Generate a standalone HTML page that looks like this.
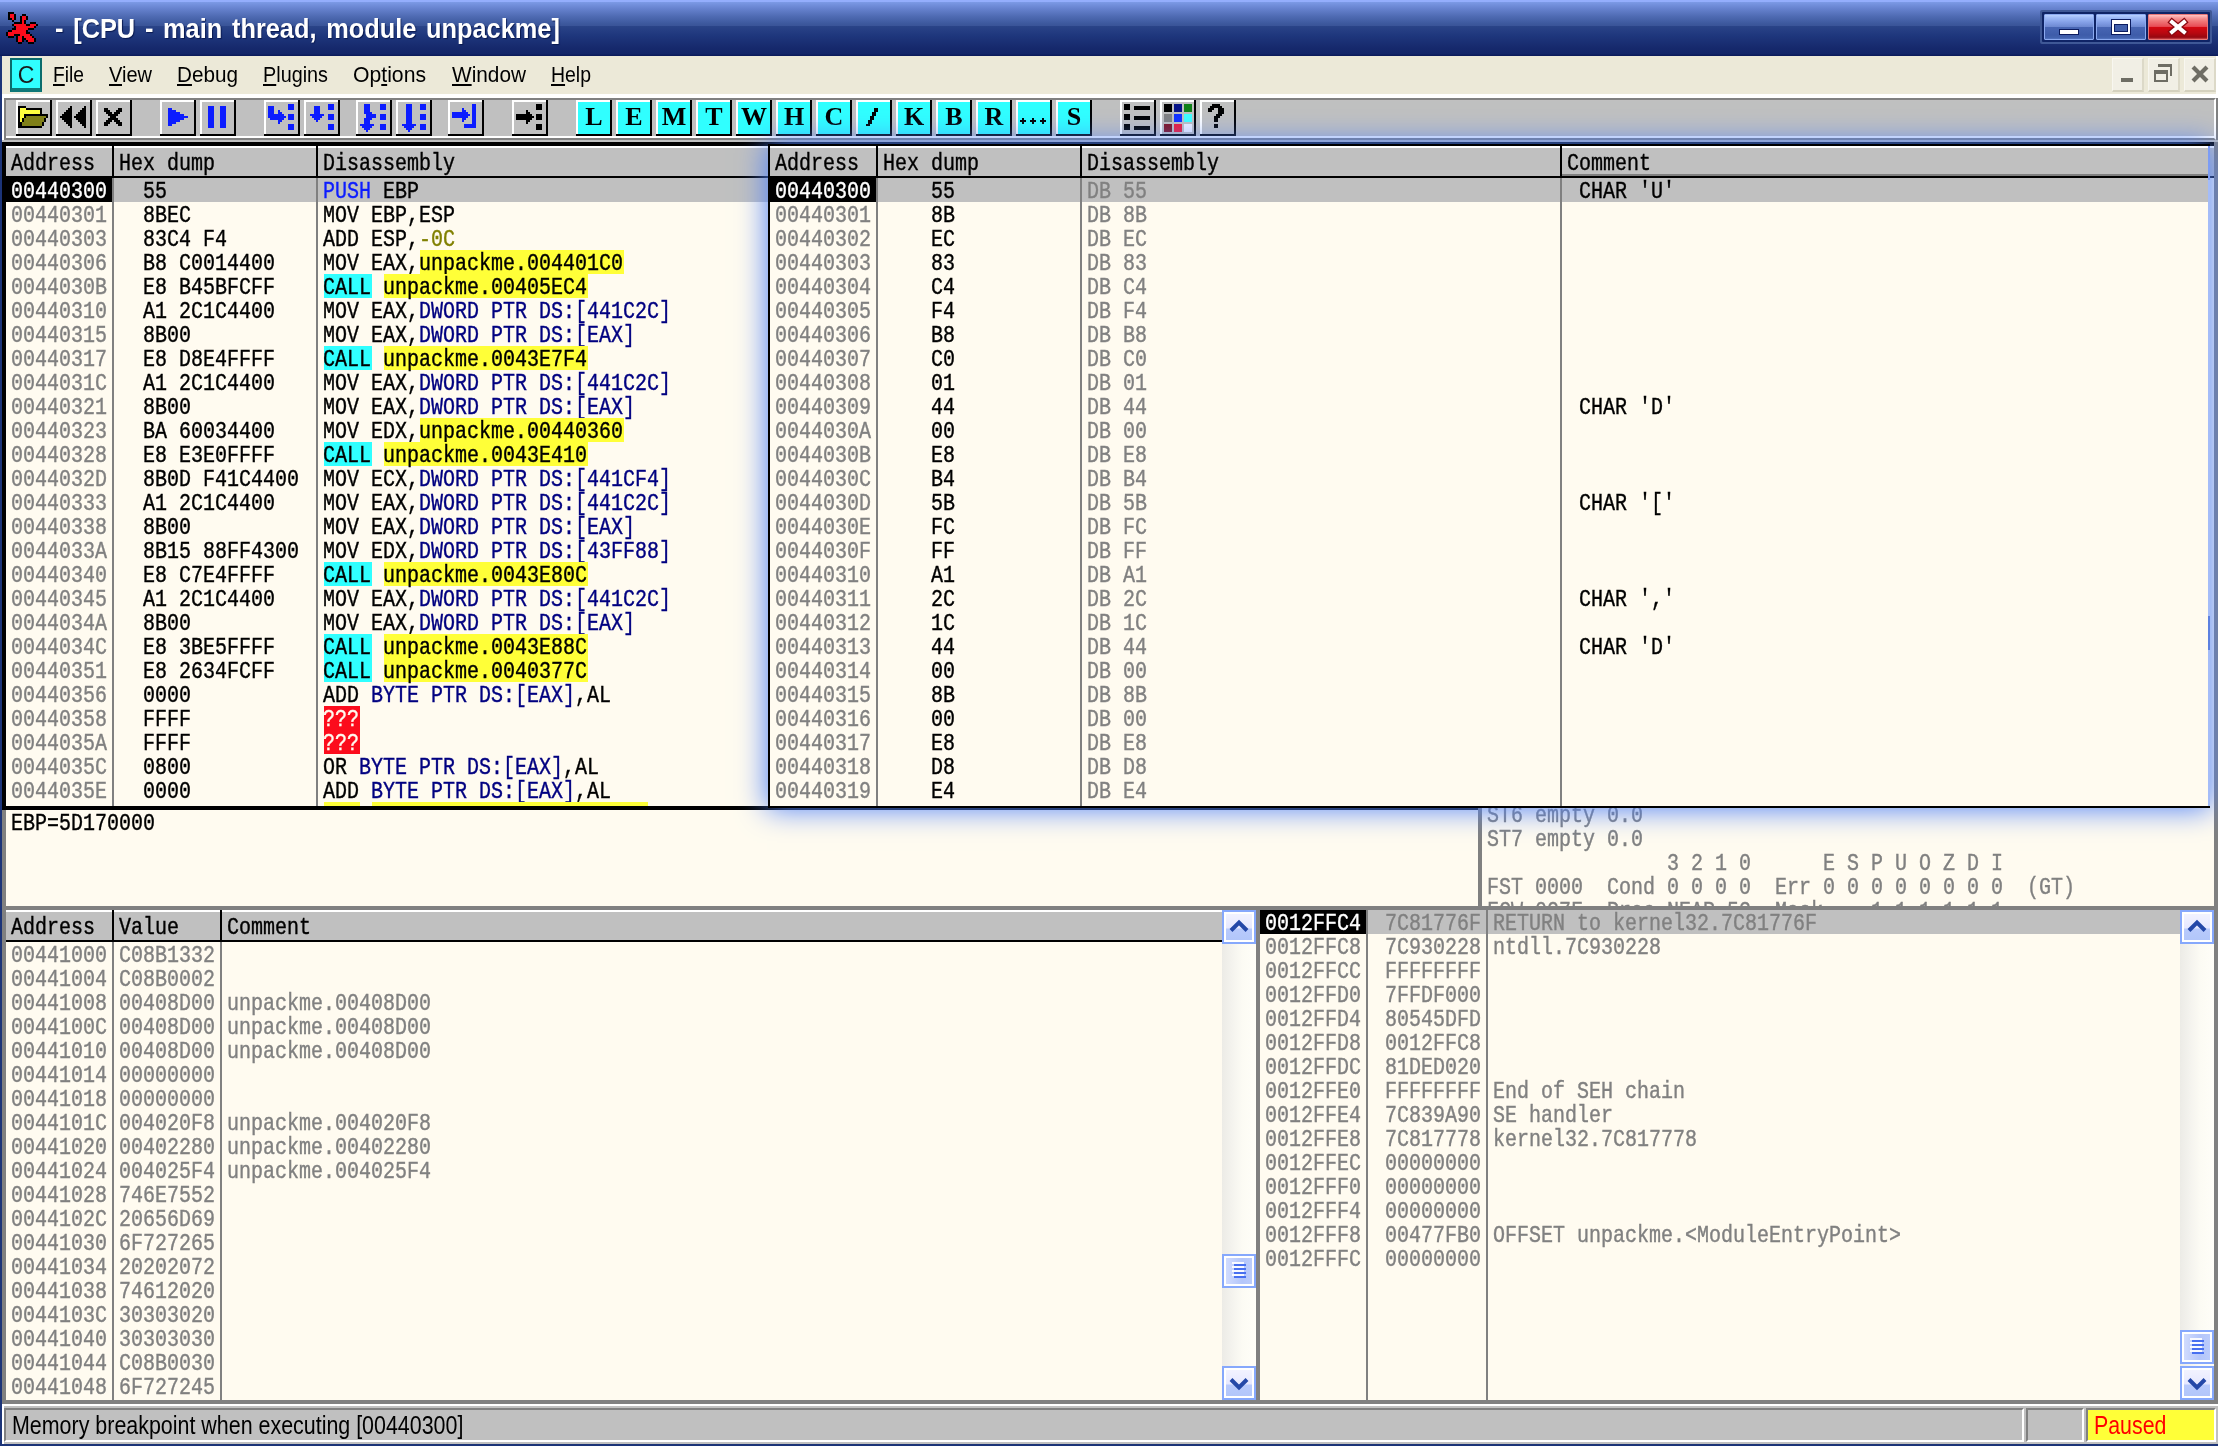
<!DOCTYPE html>
<html><head><meta charset="utf-8"><title>OllyDbg - CPU</title>
<style>
html,body{margin:0;padding:0;background:#c0c0c0;}
body{width:2218px;height:1446px;overflow:hidden;position:relative;font-family:"Liberation Sans",sans-serif;}
#root{will-change:transform;position:absolute;left:0;top:0;width:2218px;height:1446px;overflow:hidden;background:#c0c0c0;}
#root div{position:absolute;box-sizing:border-box;}
#root svg{position:absolute;display:block;}
.m{font-family:"Liberation Mono",monospace;font-size:24px;line-height:24px;height:24px;white-space:pre;transform:scaleX(.8333);transform-origin:0 0;color:#000;-webkit-text-stroke:0.4px currentColor;}
.g{color:#808080;}
.w{color:#fff;}
.clip{overflow:hidden;}
.menu{font-family:"Liberation Sans",sans-serif;font-size:22px;line-height:26px;color:#000;white-space:pre;transform-origin:0 0;}
.menu u{text-decoration:underline;text-decoration-thickness:2px;text-underline-offset:2px;}
.stat{font-family:"Liberation Sans",sans-serif;font-size:25px;line-height:30px;color:#000;white-space:pre;transform-origin:0 0;}
.tb{background:linear-gradient(#c0c0c0,#c0c0c0) 2px 2px/32px 32px no-repeat,linear-gradient(#fff,#fff) 0 0/34px 34px no-repeat,#000;}
.tbc{background:linear-gradient(#30ffff,#30ffff) 2px 2px/32px 32px no-repeat,linear-gradient(#fff,#fff) 0 0/34px 34px no-repeat,#000;padding:2px;font-family:"Liberation Serif",serif;font-weight:bold;font-size:26px;line-height:30px;text-align:center;color:#000;}

</style></head>
<body>
<div id="root">
<div style="left:0px;top:0px;width:2218px;height:56px;background:linear-gradient(to bottom,#94aefc 0px,#94aefc 2px,#7c9ae6 2px,#6884d0 8px,#506cb4 16px,#3c589c 24px,#3a5498 26px,#2a4488 26px,#1e367c 36px,#16296c 48px,#132668 54px,#0c1c5c 55px,#0c1c5c 56px);"></div>
<svg style="left:6px;top:12px" width="32" height="32" viewBox="0 0 16 16" shape-rendering="crispEdges"><rect x="1" y="0" width="3" height="1" fill="#000"/><rect x="1" y="1" width="1" height="1" fill="#000"/><rect x="2" y="1" width="2" height="1" fill="#fc0c1c"/><rect x="4" y="1" width="1" height="1" fill="#000"/><rect x="8" y="1" width="2" height="1" fill="#000"/><rect x="1" y="2" width="1" height="1" fill="#000"/><rect x="2" y="2" width="2" height="1" fill="#fc0c1c"/><rect x="4" y="2" width="1" height="1" fill="#000"/><rect x="7" y="2" width="1" height="1" fill="#000"/><rect x="8" y="2" width="2" height="1" fill="#fc0c1c"/><rect x="10" y="2" width="1" height="1" fill="#000"/><rect x="1" y="3" width="2" height="1" fill="#000"/><rect x="3" y="3" width="1" height="1" fill="#fc0c1c"/><rect x="4" y="3" width="1" height="1" fill="#000"/><rect x="7" y="3" width="1" height="1" fill="#000"/><rect x="8" y="3" width="2" height="1" fill="#fc0c1c"/><rect x="10" y="3" width="1" height="1" fill="#000"/><rect x="3" y="4" width="1" height="1" fill="#000"/><rect x="7" y="4" width="1" height="1" fill="#000"/><rect x="8" y="4" width="1" height="1" fill="#fc0c1c"/><rect x="9" y="4" width="1" height="1" fill="#000"/><rect x="4" y="5" width="4" height="1" fill="#000"/><rect x="8" y="5" width="1" height="1" fill="#fc0c1c"/><rect x="9" y="5" width="1" height="1" fill="#000"/><rect x="12" y="5" width="3" height="1" fill="#000"/><rect x="3" y="6" width="1" height="1" fill="#000"/><rect x="4" y="6" width="6" height="1" fill="#fc0c1c"/><rect x="10" y="6" width="2" height="1" fill="#000"/><rect x="12" y="6" width="3" height="1" fill="#fc0c1c"/><rect x="15" y="6" width="1" height="1" fill="#000"/><rect x="4" y="7" width="1" height="1" fill="#000"/><rect x="5" y="7" width="9" height="1" fill="#fc0c1c"/><rect x="14" y="7" width="1" height="1" fill="#000"/><rect x="3" y="8" width="2" height="1" fill="#000"/><rect x="5" y="8" width="6" height="1" fill="#fc0c1c"/><rect x="11" y="8" width="3" height="1" fill="#000"/><rect x="1" y="9" width="2" height="1" fill="#000"/><rect x="3" y="9" width="7" height="1" fill="#fc0c1c"/><rect x="10" y="9" width="1" height="1" fill="#000"/><rect x="0" y="10" width="1" height="1" fill="#000"/><rect x="1" y="10" width="9" height="1" fill="#fc0c1c"/><rect x="10" y="10" width="2" height="1" fill="#000"/><rect x="0" y="11" width="1" height="1" fill="#000"/><rect x="1" y="11" width="3" height="1" fill="#fc0c1c"/><rect x="4" y="11" width="3" height="1" fill="#000"/><rect x="7" y="11" width="5" height="1" fill="#fc0c1c"/><rect x="12" y="11" width="1" height="1" fill="#000"/><rect x="1" y="12" width="3" height="1" fill="#000"/><rect x="5" y="12" width="1" height="1" fill="#000"/><rect x="6" y="12" width="2" height="1" fill="#fc0c1c"/><rect x="8" y="12" width="1" height="1" fill="#000"/><rect x="9" y="12" width="4" height="1" fill="#fc0c1c"/><rect x="13" y="12" width="1" height="1" fill="#000"/><rect x="5" y="13" width="1" height="1" fill="#000"/><rect x="6" y="13" width="2" height="1" fill="#fc0c1c"/><rect x="8" y="13" width="2" height="1" fill="#000"/><rect x="10" y="13" width="4" height="1" fill="#fc0c1c"/><rect x="14" y="13" width="1" height="1" fill="#000"/><rect x="5" y="14" width="1" height="1" fill="#000"/><rect x="6" y="14" width="2" height="1" fill="#fc0c1c"/><rect x="8" y="14" width="1" height="1" fill="#000"/><rect x="10" y="14" width="1" height="1" fill="#000"/><rect x="11" y="14" width="3" height="1" fill="#fc0c1c"/><rect x="14" y="14" width="1" height="1" fill="#000"/><rect x="6" y="15" width="2" height="1" fill="#000"/><rect x="11" y="15" width="3" height="1" fill="#000"/></svg>
<div id="title" style="left:55px;top:11px;font:bold 28px/36px 'Liberation Sans',sans-serif;color:#fff;white-space:pre;transform-origin:0 0;word-spacing:3px;transform:scaleX(.905);text-shadow:1px 1px 1px #0a1a50">- [CPU - main thread, module unpackme]</div>
<div style="left:2040px;top:10px;width:172px;height:34px;background:#3f5896;border-radius:2px"></div>
<div style="left:2042px;top:12px;width:168px;height:30px;background:#0f2466;border-radius:1px"></div>
<div style="left:2044px;top:14px;width:50px;height:26px;background:linear-gradient(to bottom,#b8d0ff 0px,#9cb8f6 3px,#809ce4 8px,#6c88d0 12px,#4866b4 12px,#3e5caa 20px,#4464b0 23px,#6c8cd8 25px,#6c8cd8 26px);border:1px solid #8caaf0;border-radius:1px"></div>
<div style="left:2096px;top:14px;width:50px;height:26px;background:linear-gradient(to bottom,#b8d0ff 0px,#9cb8f6 3px,#809ce4 8px,#6c88d0 12px,#4866b4 12px,#3e5caa 20px,#4464b0 23px,#6c8cd8 25px,#6c8cd8 26px);border:1px solid #8caaf0;border-radius:1px"></div>
<div style="left:2148px;top:14px;width:60px;height:26px;background:linear-gradient(to bottom,#ffc4c4 0px,#f89898 3px,#f07878 6px,#e85058 11px,#e64048 12px,#d40810 12px,#b80810 18px,#980810 22px,#a01820 23px,#d45050 24px,#d45050 26px);border:1px solid #e87878;border-radius:1px"></div>
<div style="left:2059px;top:29px;width:20px;height:6px;background:#0c1c60;"></div>
<div style="left:2060px;top:30px;width:18px;height:4px;background:#fff;"></div>
<div style="left:2111px;top:19px;width:20px;height:16px;background:#0c1c60;"></div>
<div style="left:2112px;top:20px;width:18px;height:14px;background:#fff;"></div>
<div style="left:2114px;top:24px;width:14px;height:8px;background:#4260ac;border:1px solid #0c1c60"></div>
<svg style="left:2166px;top:17px" width="24" height="20" viewBox="0 0 24 20"><path d="M6 5 L18 15 M18 5 L6 15" stroke="#8a0810" stroke-width="6.5" stroke-linecap="square"/><path d="M6 5 L18 15 M18 5 L6 15" stroke="#fff" stroke-width="4" stroke-linecap="square"/></svg>
<div style="left:0px;top:56px;width:2218px;height:38px;background:#ece9d8;"></div>
<div style="left:0px;top:94px;width:2218px;height:4px;background:#fff;"></div>
<div style="left:0px;top:56px;width:2px;height:1390px;background:#1c3478;"></div>
<div style="left:2px;top:94px;width:2px;height:48px;background:#fff;"></div>
<div style="left:10px;top:58px;width:32px;height:34px;background:#30ffff;border-style:solid;border-color:#0a6c6c #0a6c6c #0f7878 #0a6c6c;border-width:2px 2px 4px 2px"></div>
<div style="left:10px;top:58px;width:32px;height:30px;font:23px/34px 'Liberation Sans',sans-serif;color:#181c1c;text-align:center">C</div>
<div class="menu" style="left:53px;top:62px;transform:scaleX(0.8740)"><u>F</u>ile</div>
<div class="menu" style="left:109px;top:62px;transform:scaleX(0.9091)"><u>V</u>iew</div>
<div class="menu" style="left:177px;top:62px;transform:scaleX(0.9408)"><u>D</u>ebug</div>
<div class="menu" style="left:263px;top:62px;transform:scaleX(0.9007)"><u>P</u>lugins</div>
<div class="menu" style="left:353px;top:62px;transform:scaleX(0.9626)">Op<u>t</u>ions</div>
<div class="menu" style="left:452px;top:62px;transform:scaleX(0.9457)"><u>W</u>indow</div>
<div class="menu" style="left:551px;top:62px;transform:scaleX(0.8840)"><u>H</u>elp</div>
<div style="left:2112px;top:58px;width:32px;height:34px;background:#f1efe5;border-style:solid;border-width:1px 2px 2px 1px;border-color:#f8f7f0 #dcd9c8 #d4d1be #f8f7f0"></div>
<div style="left:2148px;top:58px;width:32px;height:34px;background:#f1efe5;border-style:solid;border-width:1px 2px 2px 1px;border-color:#f8f7f0 #dcd9c8 #d4d1be #f8f7f0"></div>
<div style="left:2184px;top:58px;width:32px;height:34px;background:#f1efe5;border-style:solid;border-width:1px 2px 2px 1px;border-color:#f8f7f0 #dcd9c8 #d4d1be #f8f7f0"></div>
<div style="left:2121px;top:78px;width:12px;height:4px;background:#6e6d64;"></div>
<div style="left:2158px;top:64px;width:14px;height:12px;background:transparent;border-style:solid;border-color:#6e6d64;border-width:3px 2px 0 0"></div>
<div style="left:2154px;top:70px;width:14px;height:12px;background:#f1efe5;border-style:solid;border-color:#6e6d64;border-width:4px 2px 2px 2px"></div>
<svg style="left:2190px;top:64px" width="20" height="20" viewBox="0 0 20 20"><path d="M4.5 4.5 L15.5 15.5 M15.5 4.5 L4.5 15.5" stroke="#6e6d64" stroke-width="4.2" stroke-linecap="square"/></svg>
<div style="left:2216px;top:56px;width:2px;height:42px;background:#fff;"></div>
<div style="left:4px;top:98px;width:2212px;height:42px;background:#c0c0c0;border-style:solid;border-width:2px;border-color:#808080 #fff #808080 #808080"></div>
<div style="left:6px;top:136px;width:2208px;height:2px;background:#fff;"></div>
<div style="left:2216px;top:98px;width:2px;height:44px;background:#808080;"></div>
<div style="left:2px;top:140px;width:2216px;height:2px;background:#c0c0c0;"></div>
<div class="tb" style="left:16px;top:100px;width:36px;height:36px"></div>
<svg style="left:16px;top:100px" width="32" height="28" viewBox="0 0 16 14" shape-rendering="crispEdges"><rect x="1" y="3" width="4" height="1" fill="#000"/><rect x="1" y="4" width="1" height="1" fill="#000"/><rect x="2" y="4" width="3" height="1" fill="#ffff40"/><rect x="5" y="4" width="8" height="1" fill="#000"/><rect x="1" y="5" width="1" height="1" fill="#000"/><rect x="2" y="5" width="10" height="1" fill="#ffff40"/><rect x="12" y="5" width="1" height="1" fill="#000"/><rect x="1" y="6" width="1" height="1" fill="#000"/><rect x="2" y="6" width="10" height="1" fill="#ffff40"/><rect x="12" y="6" width="1" height="1" fill="#000"/><rect x="1" y="7" width="1" height="1" fill="#000"/><rect x="2" y="7" width="2" height="1" fill="#ffff40"/><rect x="4" y="7" width="12" height="1" fill="#000"/><rect x="1" y="8" width="1" height="1" fill="#000"/><rect x="2" y="8" width="2" height="1" fill="#ffff40"/><rect x="4" y="8" width="1" height="1" fill="#000"/><rect x="5" y="8" width="10" height="1" fill="#808018"/><rect x="15" y="8" width="1" height="1" fill="#000"/><rect x="1" y="9" width="1" height="1" fill="#000"/><rect x="2" y="9" width="1" height="1" fill="#ffff40"/><rect x="3" y="9" width="1" height="1" fill="#000"/><rect x="4" y="9" width="10" height="1" fill="#808018"/><rect x="14" y="9" width="1" height="1" fill="#000"/><rect x="1" y="10" width="1" height="1" fill="#000"/><rect x="2" y="10" width="1" height="1" fill="#ffff40"/><rect x="3" y="10" width="1" height="1" fill="#000"/><rect x="4" y="10" width="10" height="1" fill="#808018"/><rect x="14" y="10" width="1" height="1" fill="#000"/><rect x="1" y="11" width="2" height="1" fill="#000"/><rect x="3" y="11" width="10" height="1" fill="#808018"/><rect x="13" y="11" width="1" height="1" fill="#000"/><rect x="1" y="12" width="2" height="1" fill="#000"/><rect x="3" y="12" width="10" height="1" fill="#808018"/><rect x="13" y="12" width="1" height="1" fill="#000"/><rect x="1" y="13" width="12" height="1" fill="#000"/></svg>
<div class="tb" style="left:56px;top:100px;width:36px;height:36px"></div>
<svg style="left:56px;top:100px" width="36" height="36" viewBox="0 0 18 18" shape-rendering="crispEdges"><rect x="7" y="3" width="1" height="1" fill="#000"/><rect x="14" y="3" width="1" height="1" fill="#000"/><rect x="6" y="4" width="2" height="1" fill="#000"/><rect x="13" y="4" width="2" height="1" fill="#000"/><rect x="5" y="5" width="3" height="1" fill="#000"/><rect x="12" y="5" width="3" height="1" fill="#000"/><rect x="4" y="6" width="4" height="1" fill="#000"/><rect x="11" y="6" width="4" height="1" fill="#000"/><rect x="3" y="7" width="5" height="1" fill="#000"/><rect x="10" y="7" width="5" height="1" fill="#000"/><rect x="2" y="8" width="6" height="1" fill="#000"/><rect x="9" y="8" width="6" height="1" fill="#000"/><rect x="3" y="9" width="5" height="1" fill="#000"/><rect x="10" y="9" width="5" height="1" fill="#000"/><rect x="4" y="10" width="4" height="1" fill="#000"/><rect x="11" y="10" width="4" height="1" fill="#000"/><rect x="5" y="11" width="3" height="1" fill="#000"/><rect x="12" y="11" width="3" height="1" fill="#000"/><rect x="6" y="12" width="2" height="1" fill="#000"/><rect x="13" y="12" width="2" height="1" fill="#000"/><rect x="7" y="13" width="1" height="1" fill="#000"/><rect x="14" y="13" width="1" height="1" fill="#000"/></svg>
<div class="tb" style="left:96px;top:100px;width:36px;height:36px"></div>
<svg style="left:96px;top:100px" width="36" height="36" viewBox="0 0 18 18" shape-rendering="crispEdges"><rect x="4" y="4" width="2" height="1" fill="#000"/><rect x="11" y="4" width="2" height="1" fill="#000"/><rect x="4" y="5" width="3" height="1" fill="#000"/><rect x="10" y="5" width="3" height="1" fill="#000"/><rect x="5" y="6" width="3" height="1" fill="#000"/><rect x="9" y="6" width="3" height="1" fill="#000"/><rect x="6" y="7" width="5" height="1" fill="#000"/><rect x="7" y="8" width="3" height="1" fill="#000"/><rect x="6" y="9" width="5" height="1" fill="#000"/><rect x="5" y="10" width="3" height="1" fill="#000"/><rect x="9" y="10" width="3" height="1" fill="#000"/><rect x="4" y="11" width="3" height="1" fill="#000"/><rect x="10" y="11" width="3" height="1" fill="#000"/><rect x="4" y="12" width="2" height="1" fill="#000"/><rect x="11" y="12" width="2" height="1" fill="#000"/></svg>
<div class="tb" style="left:160px;top:100px;width:36px;height:36px"></div>
<svg style="left:160px;top:100px" width="36" height="36" viewBox="0 0 18 18" shape-rendering="crispEdges"><rect x="4" y="4" width="2" height="1" fill="#0c1cff"/><rect x="4" y="5" width="4" height="1" fill="#0c1cff"/><rect x="4" y="6" width="6" height="1" fill="#0c1cff"/><rect x="4" y="7" width="8" height="1" fill="#0c1cff"/><rect x="4" y="8" width="10" height="1" fill="#0c1cff"/><rect x="4" y="9" width="8" height="1" fill="#0c1cff"/><rect x="4" y="10" width="6" height="1" fill="#0c1cff"/><rect x="4" y="11" width="4" height="1" fill="#0c1cff"/><rect x="4" y="12" width="2" height="1" fill="#0c1cff"/></svg>
<div class="tb" style="left:200px;top:100px;width:36px;height:36px"></div>
<svg style="left:200px;top:100px" width="26" height="36" viewBox="0 0 13 18" shape-rendering="crispEdges"><rect x="4" y="3" width="3" height="1" fill="#0c1cff"/><rect x="10" y="3" width="3" height="1" fill="#0c1cff"/><rect x="4" y="4" width="3" height="1" fill="#0c1cff"/><rect x="10" y="4" width="3" height="1" fill="#0c1cff"/><rect x="4" y="5" width="3" height="1" fill="#0c1cff"/><rect x="10" y="5" width="3" height="1" fill="#0c1cff"/><rect x="4" y="6" width="3" height="1" fill="#0c1cff"/><rect x="10" y="6" width="3" height="1" fill="#0c1cff"/><rect x="4" y="7" width="3" height="1" fill="#0c1cff"/><rect x="10" y="7" width="3" height="1" fill="#0c1cff"/><rect x="4" y="8" width="3" height="1" fill="#0c1cff"/><rect x="10" y="8" width="3" height="1" fill="#0c1cff"/><rect x="4" y="9" width="3" height="1" fill="#0c1cff"/><rect x="10" y="9" width="3" height="1" fill="#0c1cff"/><rect x="4" y="10" width="3" height="1" fill="#0c1cff"/><rect x="10" y="10" width="3" height="1" fill="#0c1cff"/><rect x="4" y="11" width="3" height="1" fill="#0c1cff"/><rect x="10" y="11" width="3" height="1" fill="#0c1cff"/><rect x="4" y="12" width="3" height="1" fill="#0c1cff"/><rect x="10" y="12" width="3" height="1" fill="#0c1cff"/><rect x="4" y="13" width="3" height="1" fill="#0c1cff"/><rect x="10" y="13" width="3" height="1" fill="#0c1cff"/></svg>
<div class="tb" style="left:264px;top:100px;width:36px;height:36px"></div>
<svg style="left:264px;top:100px" width="36" height="36" viewBox="0 0 18 18" shape-rendering="crispEdges"><rect x="12" y="2" width="3" height="1" fill="#0c1cff"/><rect x="2" y="3" width="3" height="1" fill="#0c1cff"/><rect x="12" y="3" width="3" height="1" fill="#0c1cff"/><rect x="2" y="4" width="3" height="1" fill="#0c1cff"/><rect x="12" y="4" width="3" height="1" fill="#0c1cff"/><rect x="2" y="5" width="3" height="1" fill="#0c1cff"/><rect x="7" y="5" width="1" height="1" fill="#0c1cff"/><rect x="2" y="6" width="3" height="1" fill="#0c1cff"/><rect x="7" y="6" width="2" height="1" fill="#0c1cff"/><rect x="2" y="7" width="8" height="1" fill="#0c1cff"/><rect x="12" y="7" width="3" height="1" fill="#0c1cff"/><rect x="2" y="8" width="9" height="1" fill="#0c1cff"/><rect x="12" y="8" width="3" height="1" fill="#0c1cff"/><rect x="3" y="9" width="7" height="1" fill="#0c1cff"/><rect x="12" y="9" width="3" height="1" fill="#0c1cff"/><rect x="7" y="10" width="2" height="1" fill="#0c1cff"/><rect x="7" y="11" width="1" height="1" fill="#0c1cff"/><rect x="12" y="12" width="3" height="1" fill="#0c1cff"/><rect x="12" y="13" width="3" height="1" fill="#0c1cff"/><rect x="12" y="14" width="3" height="1" fill="#0c1cff"/></svg>
<div class="tb" style="left:304px;top:100px;width:36px;height:36px"></div>
<svg style="left:304px;top:100px" width="36" height="36" viewBox="0 0 18 18" shape-rendering="crispEdges"><rect x="12" y="2" width="3" height="1" fill="#0c1cff"/><rect x="5" y="3" width="3" height="1" fill="#0c1cff"/><rect x="12" y="3" width="3" height="1" fill="#0c1cff"/><rect x="5" y="4" width="3" height="1" fill="#0c1cff"/><rect x="12" y="4" width="3" height="1" fill="#0c1cff"/><rect x="5" y="5" width="3" height="1" fill="#0c1cff"/><rect x="5" y="6" width="3" height="1" fill="#0c1cff"/><rect x="3" y="7" width="7" height="1" fill="#0c1cff"/><rect x="12" y="7" width="3" height="1" fill="#0c1cff"/><rect x="4" y="8" width="5" height="1" fill="#0c1cff"/><rect x="12" y="8" width="3" height="1" fill="#0c1cff"/><rect x="5" y="9" width="3" height="1" fill="#0c1cff"/><rect x="12" y="9" width="3" height="1" fill="#0c1cff"/><rect x="6" y="10" width="1" height="1" fill="#0c1cff"/><rect x="12" y="12" width="3" height="1" fill="#0c1cff"/><rect x="12" y="13" width="3" height="1" fill="#0c1cff"/><rect x="12" y="14" width="3" height="1" fill="#0c1cff"/></svg>
<div class="tb" style="left:356px;top:100px;width:36px;height:36px"></div>
<svg style="left:356px;top:100px" width="36" height="36" viewBox="0 0 18 18" shape-rendering="crispEdges"><rect x="4" y="2" width="3" height="1" fill="#0c1cff"/><rect x="12" y="2" width="3" height="1" fill="#0c1cff"/><rect x="4" y="3" width="3" height="1" fill="#0c1cff"/><rect x="12" y="3" width="3" height="1" fill="#0c1cff"/><rect x="4" y="4" width="3" height="1" fill="#0c1cff"/><rect x="12" y="4" width="3" height="1" fill="#0c1cff"/><rect x="4" y="5" width="3" height="1" fill="#0c1cff"/><rect x="4" y="6" width="4" height="1" fill="#0c1cff"/><rect x="5" y="7" width="5" height="1" fill="#0c1cff"/><rect x="12" y="7" width="3" height="1" fill="#0c1cff"/><rect x="5" y="8" width="5" height="1" fill="#0c1cff"/><rect x="12" y="8" width="3" height="1" fill="#0c1cff"/><rect x="4" y="9" width="4" height="1" fill="#0c1cff"/><rect x="12" y="9" width="3" height="1" fill="#0c1cff"/><rect x="4" y="10" width="3" height="1" fill="#0c1cff"/><rect x="4" y="11" width="3" height="1" fill="#0c1cff"/><rect x="2" y="12" width="7" height="1" fill="#0c1cff"/><rect x="12" y="12" width="3" height="1" fill="#0c1cff"/><rect x="3" y="13" width="5" height="1" fill="#0c1cff"/><rect x="12" y="13" width="3" height="1" fill="#0c1cff"/><rect x="4" y="14" width="3" height="1" fill="#0c1cff"/><rect x="12" y="14" width="3" height="1" fill="#0c1cff"/><rect x="5" y="15" width="1" height="1" fill="#0c1cff"/></svg>
<div class="tb" style="left:396px;top:100px;width:36px;height:36px"></div>
<svg style="left:396px;top:100px" width="36" height="36" viewBox="0 0 18 18" shape-rendering="crispEdges"><rect x="5" y="2" width="3" height="1" fill="#0c1cff"/><rect x="12" y="2" width="3" height="1" fill="#0c1cff"/><rect x="5" y="3" width="3" height="1" fill="#0c1cff"/><rect x="12" y="3" width="3" height="1" fill="#0c1cff"/><rect x="5" y="4" width="3" height="1" fill="#0c1cff"/><rect x="12" y="4" width="3" height="1" fill="#0c1cff"/><rect x="5" y="5" width="3" height="1" fill="#0c1cff"/><rect x="5" y="6" width="3" height="1" fill="#0c1cff"/><rect x="5" y="7" width="3" height="1" fill="#0c1cff"/><rect x="12" y="7" width="3" height="1" fill="#0c1cff"/><rect x="5" y="8" width="3" height="1" fill="#0c1cff"/><rect x="12" y="8" width="3" height="1" fill="#0c1cff"/><rect x="5" y="9" width="3" height="1" fill="#0c1cff"/><rect x="12" y="9" width="3" height="1" fill="#0c1cff"/><rect x="5" y="10" width="3" height="1" fill="#0c1cff"/><rect x="5" y="11" width="3" height="1" fill="#0c1cff"/><rect x="3" y="12" width="7" height="1" fill="#0c1cff"/><rect x="12" y="12" width="3" height="1" fill="#0c1cff"/><rect x="4" y="13" width="5" height="1" fill="#0c1cff"/><rect x="12" y="13" width="3" height="1" fill="#0c1cff"/><rect x="5" y="14" width="3" height="1" fill="#0c1cff"/><rect x="12" y="14" width="3" height="1" fill="#0c1cff"/><rect x="6" y="15" width="1" height="1" fill="#0c1cff"/></svg>
<div class="tb" style="left:448px;top:100px;width:36px;height:36px"></div>
<svg style="left:448px;top:100px" width="28" height="28" viewBox="0 0 14 14" shape-rendering="crispEdges"><rect x="12" y="2" width="2" height="1" fill="#0c1cff"/><rect x="12" y="3" width="2" height="1" fill="#0c1cff"/><rect x="7" y="4" width="1" height="1" fill="#0c1cff"/><rect x="12" y="4" width="2" height="1" fill="#0c1cff"/><rect x="7" y="5" width="2" height="1" fill="#0c1cff"/><rect x="12" y="5" width="2" height="1" fill="#0c1cff"/><rect x="2" y="6" width="8" height="1" fill="#0c1cff"/><rect x="12" y="6" width="2" height="1" fill="#0c1cff"/><rect x="2" y="7" width="9" height="1" fill="#0c1cff"/><rect x="12" y="7" width="2" height="1" fill="#0c1cff"/><rect x="2" y="8" width="8" height="1" fill="#0c1cff"/><rect x="12" y="8" width="2" height="1" fill="#0c1cff"/><rect x="7" y="9" width="2" height="1" fill="#0c1cff"/><rect x="12" y="9" width="2" height="1" fill="#0c1cff"/><rect x="7" y="10" width="1" height="1" fill="#0c1cff"/><rect x="12" y="10" width="2" height="1" fill="#0c1cff"/><rect x="12" y="11" width="2" height="1" fill="#0c1cff"/><rect x="8" y="12" width="6" height="1" fill="#0c1cff"/><rect x="8" y="13" width="6" height="1" fill="#0c1cff"/></svg>
<div class="tb" style="left:512px;top:100px;width:36px;height:36px"></div>
<svg style="left:512px;top:100px" width="36" height="36" viewBox="0 0 18 18" shape-rendering="crispEdges"><rect x="12" y="2" width="3" height="1" fill="#000"/><rect x="12" y="3" width="3" height="1" fill="#000"/><rect x="12" y="4" width="3" height="1" fill="#000"/><rect x="7" y="5" width="1" height="1" fill="#000"/><rect x="7" y="6" width="2" height="1" fill="#000"/><rect x="2" y="7" width="8" height="1" fill="#000"/><rect x="12" y="7" width="3" height="1" fill="#000"/><rect x="2" y="8" width="9" height="1" fill="#000"/><rect x="12" y="8" width="3" height="1" fill="#000"/><rect x="2" y="9" width="8" height="1" fill="#000"/><rect x="12" y="9" width="3" height="1" fill="#000"/><rect x="7" y="10" width="2" height="1" fill="#000"/><rect x="7" y="11" width="1" height="1" fill="#000"/><rect x="12" y="12" width="3" height="1" fill="#000"/><rect x="12" y="13" width="3" height="1" fill="#000"/><rect x="12" y="14" width="3" height="1" fill="#000"/></svg>
<div class="tbc" style="left:576px;top:100px;width:36px;height:36px">L</div>
<div class="tbc" style="left:616px;top:100px;width:36px;height:36px">E</div>
<div class="tbc" style="left:656px;top:100px;width:36px;height:36px">M</div>
<div class="tbc" style="left:696px;top:100px;width:36px;height:36px">T</div>
<div class="tbc" style="left:736px;top:100px;width:36px;height:36px">W</div>
<div class="tbc" style="left:776px;top:100px;width:36px;height:36px">H</div>
<div class="tbc" style="left:816px;top:100px;width:36px;height:36px">C</div>
<div class="tbc" style="left:856px;top:100px;width:36px;height:36px"></div>
<svg style="left:856px;top:100px" width="22" height="26" viewBox="0 0 11 13" shape-rendering="crispEdges"><rect x="9" y="4" width="2" height="1" fill="#000"/><rect x="9" y="5" width="2" height="1" fill="#000"/><rect x="8" y="6" width="2" height="1" fill="#000"/><rect x="8" y="7" width="2" height="1" fill="#000"/><rect x="7" y="8" width="2" height="1" fill="#000"/><rect x="7" y="9" width="2" height="1" fill="#000"/><rect x="6" y="10" width="2" height="1" fill="#000"/><rect x="6" y="11" width="2" height="1" fill="#000"/><rect x="5" y="12" width="2" height="1" fill="#000"/></svg>
<div class="tbc" style="left:896px;top:100px;width:36px;height:36px">K</div>
<div class="tbc" style="left:936px;top:100px;width:36px;height:36px">B</div>
<div class="tbc" style="left:976px;top:100px;width:36px;height:36px">R</div>
<div class="tbc" style="left:1016px;top:100px;width:36px;height:36px"></div>
<svg style="left:1016px;top:100px" width="30" height="24" viewBox="0 0 15 12" shape-rendering="crispEdges"><rect x="3" y="9" width="1" height="1" fill="#000"/><rect x="8" y="9" width="1" height="1" fill="#000"/><rect x="13" y="9" width="1" height="1" fill="#000"/><rect x="2" y="10" width="3" height="1" fill="#000"/><rect x="7" y="10" width="3" height="1" fill="#000"/><rect x="12" y="10" width="3" height="1" fill="#000"/><rect x="3" y="11" width="1" height="1" fill="#000"/><rect x="8" y="11" width="1" height="1" fill="#000"/><rect x="13" y="11" width="1" height="1" fill="#000"/></svg>
<div class="tbc" style="left:1056px;top:100px;width:36px;height:36px">S</div>
<div class="tb" style="left:1120px;top:100px;width:36px;height:36px"></div>
<svg style="left:1120px;top:100px" width="30" height="30" viewBox="0 0 15 15" shape-rendering="crispEdges"><rect x="2" y="2" width="3" height="1" fill="#000"/><rect x="2" y="3" width="3" height="1" fill="#000"/><rect x="7" y="3" width="8" height="1" fill="#000"/><rect x="2" y="4" width="3" height="1" fill="#000"/><rect x="7" y="4" width="8" height="1" fill="#000"/><rect x="2" y="7" width="3" height="1" fill="#000"/><rect x="2" y="8" width="3" height="1" fill="#000"/><rect x="7" y="8" width="8" height="1" fill="#000"/><rect x="2" y="9" width="3" height="1" fill="#000"/><rect x="7" y="9" width="8" height="1" fill="#000"/><rect x="2" y="12" width="3" height="1" fill="#000"/><rect x="2" y="13" width="3" height="1" fill="#000"/><rect x="7" y="13" width="8" height="1" fill="#000"/><rect x="2" y="14" width="3" height="1" fill="#000"/><rect x="7" y="14" width="8" height="1" fill="#000"/></svg>
<div class="tb" style="left:1160px;top:100px;width:36px;height:36px"></div>
<svg style="left:1160px;top:100px" width="32" height="34" viewBox="0 0 16 17" shape-rendering="crispEdges"><rect x="2" y="2" width="4" height="1" fill="#000"/><rect x="7" y="2" width="4" height="1" fill="#081488"/><rect x="12" y="2" width="4" height="1" fill="#108018"/><rect x="2" y="3" width="4" height="1" fill="#000"/><rect x="7" y="3" width="4" height="1" fill="#081488"/><rect x="12" y="3" width="4" height="1" fill="#108018"/><rect x="2" y="4" width="4" height="1" fill="#000"/><rect x="7" y="4" width="4" height="1" fill="#081488"/><rect x="12" y="4" width="4" height="1" fill="#108018"/><rect x="2" y="5" width="4" height="1" fill="#000"/><rect x="7" y="5" width="4" height="1" fill="#081488"/><rect x="12" y="5" width="4" height="1" fill="#108018"/><rect x="2" y="7" width="4" height="1" fill="#808080"/><rect x="7" y="7" width="4" height="1" fill="#1030ff"/><rect x="12" y="7" width="4" height="1" fill="#40ffff"/><rect x="2" y="8" width="4" height="1" fill="#808080"/><rect x="7" y="8" width="4" height="1" fill="#1030ff"/><rect x="12" y="8" width="4" height="1" fill="#40ffff"/><rect x="2" y="9" width="4" height="1" fill="#808080"/><rect x="7" y="9" width="4" height="1" fill="#1030ff"/><rect x="12" y="9" width="4" height="1" fill="#40ffff"/><rect x="2" y="10" width="4" height="1" fill="#808080"/><rect x="7" y="10" width="4" height="1" fill="#1030ff"/><rect x="12" y="10" width="4" height="1" fill="#40ffff"/><rect x="2" y="12" width="4" height="1" fill="#801020"/><rect x="7" y="12" width="4" height="1" fill="#f01838"/><rect x="12" y="12" width="4" height="1" fill="#f0f0ff"/><rect x="2" y="13" width="4" height="1" fill="#801020"/><rect x="7" y="13" width="4" height="1" fill="#f01838"/><rect x="12" y="13" width="4" height="1" fill="#f0f0ff"/><rect x="2" y="14" width="4" height="1" fill="#801020"/><rect x="7" y="14" width="4" height="1" fill="#f01838"/><rect x="12" y="14" width="4" height="1" fill="#f0f0ff"/><rect x="2" y="15" width="4" height="1" fill="#801020"/><rect x="7" y="15" width="4" height="1" fill="#f01838"/><rect x="12" y="15" width="4" height="1" fill="#f0f0ff"/></svg>
<div class="tb" style="left:1200px;top:100px;width:36px;height:36px"></div>
<svg style="left:1200px;top:100px" width="24" height="28" viewBox="0 0 12 14" shape-rendering="crispEdges"><rect x="6" y="2" width="4" height="1" fill="#000"/><rect x="5" y="3" width="6" height="1" fill="#000"/><rect x="4" y="4" width="3" height="1" fill="#000"/><rect x="9" y="4" width="3" height="1" fill="#000"/><rect x="4" y="5" width="2" height="1" fill="#000"/><rect x="9" y="5" width="3" height="1" fill="#000"/><rect x="9" y="6" width="3" height="1" fill="#000"/><rect x="8" y="7" width="3" height="1" fill="#000"/><rect x="7" y="8" width="3" height="1" fill="#000"/><rect x="7" y="9" width="2" height="1" fill="#000"/><rect x="7" y="10" width="2" height="1" fill="#000"/><rect x="7" y="12" width="2" height="1" fill="#000"/><rect x="7" y="13" width="2" height="1" fill="#000"/></svg>
<div style="left:2px;top:1404px;width:2216px;height:2px;background:#fff;"></div>
<div style="left:2px;top:1406px;width:2216px;height:38px;background:#c0c0c0;"></div>
<div style="left:2px;top:1404px;width:2px;height:40px;background:#fff;"></div>
<div style="left:0px;top:1444px;width:2218px;height:2px;background:#1c3478;"></div>
<div style="left:4px;top:1408px;width:2020px;height:34px;background:#c0c0c0;border-style:solid;border-width:2px;border-color:#808080 #fff #fff #808080"></div>
<div style="left:2026px;top:1408px;width:58px;height:34px;background:#c0c0c0;border-style:solid;border-width:2px;border-color:#808080 #fff #fff #808080"></div>
<div style="left:2086px;top:1408px;width:130px;height:34px;background:#ffff38;border-style:solid;border-width:2px;border-color:#808080 #fff #fff #808080"></div>
<div id="stat" class="stat" style="left:12px;top:1410px;transform:scaleX(.857)">Memory breakpoint when executing [00440300]</div>
<div id="paused" class="stat" style="left:2094px;top:1410px;color:#ff0000;transform:scaleX(.854)">Paused</div>
<div style="left:2px;top:142px;width:2216px;height:4px;background:#000;"></div>
<div style="left:2px;top:142px;width:4px;height:668px;background:#000;"></div>
<div style="left:6px;top:178px;width:2208px;height:628px;background:#fffbf0;"></div>
<div style="left:2px;top:806px;width:1476px;height:4px;background:#000;"></div>
<div style="left:6px;top:146px;width:106px;height:30px;background:#c0c0c0;border-top:2px solid #fff"></div>
<div class="m" style="left:11px;top:152px">Address</div>
<div style="left:112px;top:146px;width:2px;height:30px;background:#000;"></div>
<div style="left:114px;top:146px;width:202px;height:30px;background:#c0c0c0;border-top:2px solid #fff"></div>
<div class="m" style="left:119px;top:152px">Hex dump</div>
<div style="left:316px;top:146px;width:2px;height:30px;background:#000;"></div>
<div style="left:318px;top:146px;width:1896px;height:30px;background:#c0c0c0;border-top:2px solid #fff"></div>
<div class="m" style="left:323px;top:152px">Disassembly</div>
<div style="left:6px;top:176px;width:2208px;height:2px;background:#000;"></div>
<div style="left:112px;top:178px;width:2px;height:628px;background:#808080;"></div>
<div style="left:316px;top:178px;width:2px;height:628px;background:#808080;"></div>
<div style="left:6px;top:178px;width:106px;height:24px;background:#000;"></div>
<div style="left:114px;top:178px;width:202px;height:24px;background:#c0c0c0;"></div>
<div style="left:318px;top:178px;width:1892px;height:24px;background:#c0c0c0;"></div>
<div class="m" style="left:11px;top:180px"><span style="color:#fff">00440300</span></div>
<div class="m" style="left:119px;top:180px">  55</div>
<div class="m" style="left:323px;top:180px"><span style="color:#0c1cff">PUSH</span> EBP</div>
<div class="m" style="left:11px;top:204px"><span style="color:#808080">00440301</span></div>
<div class="m" style="left:119px;top:204px">  8BEC</div>
<div class="m" style="left:323px;top:204px">MOV EBP,ESP</div>
<div class="m" style="left:11px;top:228px"><span style="color:#808080">00440303</span></div>
<div class="m" style="left:119px;top:228px">  83C4 F4</div>
<div class="m" style="left:323px;top:228px">ADD ESP,<span style="color:#808000">-0C</span></div>
<div class="m" style="left:11px;top:252px"><span style="color:#808080">00440306</span></div>
<div class="m" style="left:119px;top:252px">  B8 C0014400</div>
<div style="left:420px;top:250px;width:204px;height:24px;background:#ffff38;"></div>
<div class="m" style="left:323px;top:252px">MOV EAX,unpackme.004401C0</div>
<div class="m" style="left:11px;top:276px"><span style="color:#808080">0044030B</span></div>
<div class="m" style="left:119px;top:276px">  E8 B45BFCFF</div>
<div style="left:324px;top:274px;width:48px;height:24px;background:#30ffff;"></div>
<div style="left:384px;top:274px;width:204px;height:24px;background:#ffff38;"></div>
<div class="m" style="left:323px;top:276px">CALL unpackme.00405EC4</div>
<div class="m" style="left:11px;top:300px"><span style="color:#808080">00440310</span></div>
<div class="m" style="left:119px;top:300px">  A1 2C1C4400</div>
<div class="m" style="left:323px;top:300px">MOV EAX,<span style="color:#000080">DWORD PTR DS:[441C2C]</span></div>
<div class="m" style="left:11px;top:324px"><span style="color:#808080">00440315</span></div>
<div class="m" style="left:119px;top:324px">  8B00</div>
<div class="m" style="left:323px;top:324px">MOV EAX,<span style="color:#000080">DWORD PTR DS:[EAX]</span></div>
<div class="m" style="left:11px;top:348px"><span style="color:#808080">00440317</span></div>
<div class="m" style="left:119px;top:348px">  E8 D8E4FFFF</div>
<div style="left:324px;top:346px;width:48px;height:24px;background:#30ffff;"></div>
<div style="left:384px;top:346px;width:204px;height:24px;background:#ffff38;"></div>
<div class="m" style="left:323px;top:348px">CALL unpackme.0043E7F4</div>
<div class="m" style="left:11px;top:372px"><span style="color:#808080">0044031C</span></div>
<div class="m" style="left:119px;top:372px">  A1 2C1C4400</div>
<div class="m" style="left:323px;top:372px">MOV EAX,<span style="color:#000080">DWORD PTR DS:[441C2C]</span></div>
<div class="m" style="left:11px;top:396px"><span style="color:#808080">00440321</span></div>
<div class="m" style="left:119px;top:396px">  8B00</div>
<div class="m" style="left:323px;top:396px">MOV EAX,<span style="color:#000080">DWORD PTR DS:[EAX]</span></div>
<div class="m" style="left:11px;top:420px"><span style="color:#808080">00440323</span></div>
<div class="m" style="left:119px;top:420px">  BA 60034400</div>
<div style="left:420px;top:418px;width:204px;height:24px;background:#ffff38;"></div>
<div class="m" style="left:323px;top:420px">MOV EDX,unpackme.00440360</div>
<div class="m" style="left:11px;top:444px"><span style="color:#808080">00440328</span></div>
<div class="m" style="left:119px;top:444px">  E8 E3E0FFFF</div>
<div style="left:324px;top:442px;width:48px;height:24px;background:#30ffff;"></div>
<div style="left:384px;top:442px;width:204px;height:24px;background:#ffff38;"></div>
<div class="m" style="left:323px;top:444px">CALL unpackme.0043E410</div>
<div class="m" style="left:11px;top:468px"><span style="color:#808080">0044032D</span></div>
<div class="m" style="left:119px;top:468px">  8B0D F41C4400</div>
<div class="m" style="left:323px;top:468px">MOV ECX,<span style="color:#000080">DWORD PTR DS:[441CF4]</span></div>
<div class="m" style="left:11px;top:492px"><span style="color:#808080">00440333</span></div>
<div class="m" style="left:119px;top:492px">  A1 2C1C4400</div>
<div class="m" style="left:323px;top:492px">MOV EAX,<span style="color:#000080">DWORD PTR DS:[441C2C]</span></div>
<div class="m" style="left:11px;top:516px"><span style="color:#808080">00440338</span></div>
<div class="m" style="left:119px;top:516px">  8B00</div>
<div class="m" style="left:323px;top:516px">MOV EAX,<span style="color:#000080">DWORD PTR DS:[EAX]</span></div>
<div class="m" style="left:11px;top:540px"><span style="color:#808080">0044033A</span></div>
<div class="m" style="left:119px;top:540px">  8B15 88FF4300</div>
<div class="m" style="left:323px;top:540px">MOV EDX,<span style="color:#000080">DWORD PTR DS:[43FF88]</span></div>
<div class="m" style="left:11px;top:564px"><span style="color:#808080">00440340</span></div>
<div class="m" style="left:119px;top:564px">  E8 C7E4FFFF</div>
<div style="left:324px;top:562px;width:48px;height:24px;background:#30ffff;"></div>
<div style="left:384px;top:562px;width:204px;height:24px;background:#ffff38;"></div>
<div class="m" style="left:323px;top:564px">CALL unpackme.0043E80C</div>
<div class="m" style="left:11px;top:588px"><span style="color:#808080">00440345</span></div>
<div class="m" style="left:119px;top:588px">  A1 2C1C4400</div>
<div class="m" style="left:323px;top:588px">MOV EAX,<span style="color:#000080">DWORD PTR DS:[441C2C]</span></div>
<div class="m" style="left:11px;top:612px"><span style="color:#808080">0044034A</span></div>
<div class="m" style="left:119px;top:612px">  8B00</div>
<div class="m" style="left:323px;top:612px">MOV EAX,<span style="color:#000080">DWORD PTR DS:[EAX]</span></div>
<div class="m" style="left:11px;top:636px"><span style="color:#808080">0044034C</span></div>
<div class="m" style="left:119px;top:636px">  E8 3BE5FFFF</div>
<div style="left:324px;top:634px;width:48px;height:24px;background:#30ffff;"></div>
<div style="left:384px;top:634px;width:204px;height:24px;background:#ffff38;"></div>
<div class="m" style="left:323px;top:636px">CALL unpackme.0043E88C</div>
<div class="m" style="left:11px;top:660px"><span style="color:#808080">00440351</span></div>
<div class="m" style="left:119px;top:660px">  E8 2634FCFF</div>
<div style="left:324px;top:658px;width:48px;height:24px;background:#30ffff;"></div>
<div style="left:384px;top:658px;width:204px;height:24px;background:#ffff38;"></div>
<div class="m" style="left:323px;top:660px">CALL unpackme.0040377C</div>
<div class="m" style="left:11px;top:684px"><span style="color:#808080">00440356</span></div>
<div class="m" style="left:119px;top:684px">  0000</div>
<div class="m" style="left:323px;top:684px">ADD <span style="color:#000080">BYTE PTR DS:[EAX]</span>,AL</div>
<div class="m" style="left:11px;top:708px"><span style="color:#808080">00440358</span></div>
<div class="m" style="left:119px;top:708px">  FFFF</div>
<div style="left:324px;top:706px;width:36px;height:24px;background:#fc0c1c;"></div>
<div class="m" style="left:323px;top:708px"><span style="color:#fffbf0">???</span></div>
<div class="m" style="left:11px;top:732px"><span style="color:#808080">0044035A</span></div>
<div class="m" style="left:119px;top:732px">  FFFF</div>
<div style="left:324px;top:730px;width:36px;height:24px;background:#fc0c1c;"></div>
<div class="m" style="left:323px;top:732px"><span style="color:#fffbf0">???</span></div>
<div class="m" style="left:11px;top:756px"><span style="color:#808080">0044035C</span></div>
<div class="m" style="left:119px;top:756px">  0800</div>
<div class="m" style="left:323px;top:756px">OR <span style="color:#000080">BYTE PTR DS:[EAX]</span>,AL</div>
<div class="m" style="left:11px;top:780px"><span style="color:#808080">0044035E</span></div>
<div class="m" style="left:119px;top:780px">  0000</div>
<div class="m" style="left:323px;top:780px">ADD <span style="color:#000080">BYTE PTR DS:[EAX]</span>,AL</div>
<div style="left:324px;top:802px;width:36px;height:4px;background:#ffff38;"></div>
<div style="left:372px;top:802px;width:276px;height:4px;background:#ffff38;"></div>
<div style="left:2px;top:810px;width:4px;height:594px;background:#808080;"></div>
<div style="left:6px;top:810px;width:1472px;height:96px;background:#fffbf0;"></div>
<div class="m" style="left:11px;top:812px">EBP=5D170000</div>
<div style="left:1478px;top:806px;width:4px;height:100px;background:#808080;"></div>
<div class="clip" style="left:1482px;top:806px;width:732px;height:100px;background:#fffbf0">
<div class="m" style="left:5px;top:-2px"><span style="color:#808080">ST6 empty 0.0</span></div>
<div class="m" style="left:5px;top:22px"><span style="color:#808080">ST7 empty 0.0</span></div>
<div class="m" style="left:5px;top:46px"><span style="color:#808080">               3 2 1 0      E S P U O Z D I</span></div>
<div class="m" style="left:5px;top:70px"><span style="color:#808080">FST 0000  Cond 0 0 0 0  Err 0 0 0 0 0 0 0 0  (GT)</span></div>
<div class="m" style="left:5px;top:94px"><span style="color:#808080">FCW 027F  Prec NEAR,53  Mask    1 1 1 1 1 1</span></div>
</div>
<div style="left:2214px;top:142px;width:4px;height:1262px;background:#808080;"></div>
<div style="left:2px;top:906px;width:2216px;height:4px;background:#808080;"></div>
<div style="left:6px;top:910px;width:1216px;height:490px;background:#fffbf0;"></div>
<div style="left:6px;top:910px;width:106px;height:30px;background:#c0c0c0;border-top:2px solid #fff"></div>
<div class="m" style="left:11px;top:916px">Address</div>
<div style="left:112px;top:910px;width:2px;height:30px;background:#000;"></div>
<div style="left:114px;top:910px;width:106px;height:30px;background:#c0c0c0;border-top:2px solid #fff"></div>
<div class="m" style="left:119px;top:916px">Value</div>
<div style="left:220px;top:910px;width:2px;height:30px;background:#000;"></div>
<div style="left:222px;top:910px;width:1000px;height:30px;background:#c0c0c0;border-top:2px solid #fff"></div>
<div class="m" style="left:227px;top:916px">Comment</div>
<div style="left:6px;top:940px;width:1216px;height:2px;background:#000;"></div>
<div style="left:112px;top:942px;width:2px;height:458px;background:#808080;"></div>
<div style="left:220px;top:942px;width:2px;height:458px;background:#808080;"></div>
<div class="m" style="left:11px;top:944px"><span style="color:#808080">00441000</span></div>
<div class="m" style="left:119px;top:944px"><span style="color:#808080">C08B1332</span></div>
<div class="m" style="left:11px;top:968px"><span style="color:#808080">00441004</span></div>
<div class="m" style="left:119px;top:968px"><span style="color:#808080">C08B0002</span></div>
<div class="m" style="left:11px;top:992px"><span style="color:#808080">00441008</span></div>
<div class="m" style="left:119px;top:992px"><span style="color:#808080">00408D00</span></div>
<div class="m" style="left:227px;top:992px"><span style="color:#808080">unpackme.00408D00</span></div>
<div class="m" style="left:11px;top:1016px"><span style="color:#808080">0044100C</span></div>
<div class="m" style="left:119px;top:1016px"><span style="color:#808080">00408D00</span></div>
<div class="m" style="left:227px;top:1016px"><span style="color:#808080">unpackme.00408D00</span></div>
<div class="m" style="left:11px;top:1040px"><span style="color:#808080">00441010</span></div>
<div class="m" style="left:119px;top:1040px"><span style="color:#808080">00408D00</span></div>
<div class="m" style="left:227px;top:1040px"><span style="color:#808080">unpackme.00408D00</span></div>
<div class="m" style="left:11px;top:1064px"><span style="color:#808080">00441014</span></div>
<div class="m" style="left:119px;top:1064px"><span style="color:#808080">00000000</span></div>
<div class="m" style="left:11px;top:1088px"><span style="color:#808080">00441018</span></div>
<div class="m" style="left:119px;top:1088px"><span style="color:#808080">00000000</span></div>
<div class="m" style="left:11px;top:1112px"><span style="color:#808080">0044101C</span></div>
<div class="m" style="left:119px;top:1112px"><span style="color:#808080">004020F8</span></div>
<div class="m" style="left:227px;top:1112px"><span style="color:#808080">unpackme.004020F8</span></div>
<div class="m" style="left:11px;top:1136px"><span style="color:#808080">00441020</span></div>
<div class="m" style="left:119px;top:1136px"><span style="color:#808080">00402280</span></div>
<div class="m" style="left:227px;top:1136px"><span style="color:#808080">unpackme.00402280</span></div>
<div class="m" style="left:11px;top:1160px"><span style="color:#808080">00441024</span></div>
<div class="m" style="left:119px;top:1160px"><span style="color:#808080">004025F4</span></div>
<div class="m" style="left:227px;top:1160px"><span style="color:#808080">unpackme.004025F4</span></div>
<div class="m" style="left:11px;top:1184px"><span style="color:#808080">00441028</span></div>
<div class="m" style="left:119px;top:1184px"><span style="color:#808080">746E7552</span></div>
<div class="m" style="left:11px;top:1208px"><span style="color:#808080">0044102C</span></div>
<div class="m" style="left:119px;top:1208px"><span style="color:#808080">20656D69</span></div>
<div class="m" style="left:11px;top:1232px"><span style="color:#808080">00441030</span></div>
<div class="m" style="left:119px;top:1232px"><span style="color:#808080">6F727265</span></div>
<div class="m" style="left:11px;top:1256px"><span style="color:#808080">00441034</span></div>
<div class="m" style="left:119px;top:1256px"><span style="color:#808080">20202072</span></div>
<div class="m" style="left:11px;top:1280px"><span style="color:#808080">00441038</span></div>
<div class="m" style="left:119px;top:1280px"><span style="color:#808080">74612020</span></div>
<div class="m" style="left:11px;top:1304px"><span style="color:#808080">0044103C</span></div>
<div class="m" style="left:119px;top:1304px"><span style="color:#808080">30303020</span></div>
<div class="m" style="left:11px;top:1328px"><span style="color:#808080">00441040</span></div>
<div class="m" style="left:119px;top:1328px"><span style="color:#808080">30303030</span></div>
<div class="m" style="left:11px;top:1352px"><span style="color:#808080">00441044</span></div>
<div class="m" style="left:119px;top:1352px"><span style="color:#808080">C08B0030</span></div>
<div class="m" style="left:11px;top:1376px"><span style="color:#808080">00441048</span></div>
<div class="m" style="left:119px;top:1376px"><span style="color:#808080">6F727245</span></div>
<div style="left:1222px;top:910px;width:34px;height:490px;background:linear-gradient(to right,#ecebe6 0px,#f4f3ee 10px,#fcfbf4 20px,#fffef8 34px);"></div>
<div style="left:1222px;top:910px;width:34px;height:34px;background:linear-gradient(to bottom,#f4f4ff 0px,#e6e8ff 16px,#b8cafc 17px,#b2c6fa 28px,#c6d6fc 34px);border:2px solid #86a8fc;box-shadow:inset 0 0 0 2px #fff;"></div>
<svg style="left:1229px;top:919px" width="20" height="14" viewBox="0 0 20 14"><path d="M2 11.5 L10 3.5 L18 11.5" fill="none" stroke="#2448a8" stroke-width="4"/></svg>
<div style="left:1222px;top:1366px;width:34px;height:34px;background:linear-gradient(to bottom,#f4f4ff 0px,#e6e8ff 16px,#b8cafc 17px,#b2c6fa 28px,#c6d6fc 34px);border:2px solid #86a8fc;box-shadow:inset 0 0 0 2px #fff;"></div>
<svg style="left:1229px;top:1377px" width="20" height="14" viewBox="0 0 20 14"><path d="M2 2.5 L10 10.5 L18 2.5" fill="none" stroke="#2448a8" stroke-width="4"/></svg>
<div style="left:1222px;top:1254px;width:34px;height:34px;background:linear-gradient(to right,#d4defe,#b4c6fa 60%,#bccdfc);border:2px solid #86a8fc;box-shadow:inset 0 0 0 2px #fff;"></div>
<div style="left:1232px;top:1262px;width:12px;height:2px;background:#f8faff;"></div>
<div style="left:1234px;top:1264px;width:12px;height:2px;background:#4870f0;"></div>
<div style="left:1232px;top:1266px;width:12px;height:2px;background:#f8faff;"></div>
<div style="left:1234px;top:1268px;width:12px;height:2px;background:#4870f0;"></div>
<div style="left:1232px;top:1270px;width:12px;height:2px;background:#f8faff;"></div>
<div style="left:1234px;top:1272px;width:12px;height:2px;background:#4870f0;"></div>
<div style="left:1232px;top:1274px;width:12px;height:2px;background:#f8faff;"></div>
<div style="left:1234px;top:1276px;width:12px;height:2px;background:#4870f0;"></div>
<div style="left:1256px;top:910px;width:4px;height:490px;background:#808080;"></div>
<div style="left:1260px;top:910px;width:920px;height:490px;background:#fffbf0;"></div>
<div style="left:1366px;top:910px;width:2px;height:490px;background:#808080;"></div>
<div style="left:1486px;top:910px;width:2px;height:490px;background:#808080;"></div>
<div style="left:1260px;top:910px;width:106px;height:24px;background:#000;"></div>
<div style="left:1368px;top:910px;width:118px;height:24px;background:#c0c0c0;"></div>
<div style="left:1488px;top:910px;width:692px;height:24px;background:#c0c0c0;"></div>
<div class="m" style="left:1265px;top:912px"><span style="color:#fff">0012FFC4</span></div>
<div class="m" style="left:1373px;top:912px"><span style="color:#808080"> 7C81776F</span></div>
<div class="m" style="left:1493px;top:912px"><span style="color:#808080">RETURN to kernel32.7C81776F</span></div>
<div class="m" style="left:1265px;top:936px"><span style="color:#808080">0012FFC8</span></div>
<div class="m" style="left:1373px;top:936px"><span style="color:#808080"> 7C930228</span></div>
<div class="m" style="left:1493px;top:936px"><span style="color:#808080">ntdll.7C930228</span></div>
<div class="m" style="left:1265px;top:960px"><span style="color:#808080">0012FFCC</span></div>
<div class="m" style="left:1373px;top:960px"><span style="color:#808080"> FFFFFFFF</span></div>
<div class="m" style="left:1265px;top:984px"><span style="color:#808080">0012FFD0</span></div>
<div class="m" style="left:1373px;top:984px"><span style="color:#808080"> 7FFDF000</span></div>
<div class="m" style="left:1265px;top:1008px"><span style="color:#808080">0012FFD4</span></div>
<div class="m" style="left:1373px;top:1008px"><span style="color:#808080"> 80545DFD</span></div>
<div class="m" style="left:1265px;top:1032px"><span style="color:#808080">0012FFD8</span></div>
<div class="m" style="left:1373px;top:1032px"><span style="color:#808080"> 0012FFC8</span></div>
<div class="m" style="left:1265px;top:1056px"><span style="color:#808080">0012FFDC</span></div>
<div class="m" style="left:1373px;top:1056px"><span style="color:#808080"> 81DED020</span></div>
<div class="m" style="left:1265px;top:1080px"><span style="color:#808080">0012FFE0</span></div>
<div class="m" style="left:1373px;top:1080px"><span style="color:#808080"> FFFFFFFF</span></div>
<div class="m" style="left:1493px;top:1080px"><span style="color:#808080">End of SEH chain</span></div>
<div class="m" style="left:1265px;top:1104px"><span style="color:#808080">0012FFE4</span></div>
<div class="m" style="left:1373px;top:1104px"><span style="color:#808080"> 7C839A90</span></div>
<div class="m" style="left:1493px;top:1104px"><span style="color:#808080">SE handler</span></div>
<div class="m" style="left:1265px;top:1128px"><span style="color:#808080">0012FFE8</span></div>
<div class="m" style="left:1373px;top:1128px"><span style="color:#808080"> 7C817778</span></div>
<div class="m" style="left:1493px;top:1128px"><span style="color:#808080">kernel32.7C817778</span></div>
<div class="m" style="left:1265px;top:1152px"><span style="color:#808080">0012FFEC</span></div>
<div class="m" style="left:1373px;top:1152px"><span style="color:#808080"> 00000000</span></div>
<div class="m" style="left:1265px;top:1176px"><span style="color:#808080">0012FFF0</span></div>
<div class="m" style="left:1373px;top:1176px"><span style="color:#808080"> 00000000</span></div>
<div class="m" style="left:1265px;top:1200px"><span style="color:#808080">0012FFF4</span></div>
<div class="m" style="left:1373px;top:1200px"><span style="color:#808080"> 00000000</span></div>
<div class="m" style="left:1265px;top:1224px"><span style="color:#808080">0012FFF8</span></div>
<div class="m" style="left:1373px;top:1224px"><span style="color:#808080"> 00477FB0</span></div>
<div class="m" style="left:1493px;top:1224px"><span style="color:#808080">OFFSET unpackme.&lt;ModuleEntryPoint&gt;</span></div>
<div class="m" style="left:1265px;top:1248px"><span style="color:#808080">0012FFFC</span></div>
<div class="m" style="left:1373px;top:1248px"><span style="color:#808080"> 00000000</span></div>
<div style="left:2180px;top:910px;width:34px;height:490px;background:linear-gradient(to right,#ecebe6 0px,#f4f3ee 10px,#fcfbf4 20px,#fffef8 34px);"></div>
<div style="left:2180px;top:910px;width:34px;height:34px;background:linear-gradient(to bottom,#f4f4ff 0px,#e6e8ff 16px,#b8cafc 17px,#b2c6fa 28px,#c6d6fc 34px);border:2px solid #86a8fc;box-shadow:inset 0 0 0 2px #fff;"></div>
<svg style="left:2187px;top:919px" width="20" height="14" viewBox="0 0 20 14"><path d="M2 11.5 L10 3.5 L18 11.5" fill="none" stroke="#2448a8" stroke-width="4"/></svg>
<div style="left:2180px;top:1366px;width:34px;height:34px;background:linear-gradient(to bottom,#f4f4ff 0px,#e6e8ff 16px,#b8cafc 17px,#b2c6fa 28px,#c6d6fc 34px);border:2px solid #86a8fc;box-shadow:inset 0 0 0 2px #fff;"></div>
<svg style="left:2187px;top:1377px" width="20" height="14" viewBox="0 0 20 14"><path d="M2 2.5 L10 10.5 L18 2.5" fill="none" stroke="#2448a8" stroke-width="4"/></svg>
<div style="left:2180px;top:1330px;width:34px;height:34px;background:linear-gradient(to right,#d4defe,#b4c6fa 60%,#bccdfc);border:2px solid #86a8fc;box-shadow:inset 0 0 0 2px #fff;"></div>
<div style="left:2190px;top:1338px;width:12px;height:2px;background:#f8faff;"></div>
<div style="left:2192px;top:1340px;width:12px;height:2px;background:#4870f0;"></div>
<div style="left:2190px;top:1342px;width:12px;height:2px;background:#f8faff;"></div>
<div style="left:2192px;top:1344px;width:12px;height:2px;background:#4870f0;"></div>
<div style="left:2190px;top:1346px;width:12px;height:2px;background:#f8faff;"></div>
<div style="left:2192px;top:1348px;width:12px;height:2px;background:#4870f0;"></div>
<div style="left:2190px;top:1350px;width:12px;height:2px;background:#f8faff;"></div>
<div style="left:2192px;top:1352px;width:12px;height:2px;background:#4870f0;"></div>
<div style="left:2px;top:1400px;width:2216px;height:4px;background:#808080;"></div>
<div style="left:768px;top:144px;width:1442px;height:664px;background:transparent;box-shadow:0 0 28px 1px rgba(78,128,248,1)"></div>
<div style="left:768px;top:144px;width:1442px;height:664px;background:#000;"></div>
<div style="left:770px;top:146px;width:1438px;height:660px;background:#fffbf0;"></div>
<div style="left:770px;top:146px;width:106px;height:30px;background:#c0c0c0;border-top:2px solid #fff"></div>
<div class="m" style="left:775px;top:152px">Address</div>
<div style="left:876px;top:146px;width:2px;height:30px;background:#000;"></div>
<div style="left:878px;top:146px;width:202px;height:30px;background:#c0c0c0;border-top:2px solid #fff"></div>
<div class="m" style="left:883px;top:152px">Hex dump</div>
<div style="left:1080px;top:146px;width:2px;height:30px;background:#000;"></div>
<div style="left:1082px;top:146px;width:478px;height:30px;background:#c0c0c0;border-top:2px solid #fff"></div>
<div class="m" style="left:1087px;top:152px">Disassembly</div>
<div style="left:1560px;top:146px;width:2px;height:30px;background:#000;"></div>
<div style="left:1562px;top:146px;width:646px;height:30px;background:#c0c0c0;border-top:2px solid #fff"></div>
<div class="m" style="left:1567px;top:152px">Comment</div>
<div style="left:770px;top:176px;width:1438px;height:2px;background:#000;"></div>
<div style="left:1562px;top:174px;width:646px;height:2px;background:#808080;"></div>
<div style="left:876px;top:178px;width:2px;height:628px;background:#808080;"></div>
<div style="left:1080px;top:178px;width:2px;height:628px;background:#808080;"></div>
<div style="left:1560px;top:178px;width:2px;height:628px;background:#808080;"></div>
<div style="left:770px;top:178px;width:106px;height:24px;background:#000;"></div>
<div style="left:878px;top:178px;width:202px;height:24px;background:#c0c0c0;"></div>
<div style="left:1082px;top:178px;width:478px;height:24px;background:#c0c0c0;"></div>
<div style="left:1562px;top:178px;width:646px;height:24px;background:#c0c0c0;"></div>
<div class="m" style="left:775px;top:180px"><span style="color:#fff">00440300</span></div>
<div class="m" style="left:883px;top:180px">    55</div>
<div class="m" style="left:1087px;top:180px"><span style="color:#808080">DB 55</span></div>
<div class="m" style="left:1567px;top:180px"> CHAR 'U'</div>
<div class="m" style="left:775px;top:204px"><span style="color:#808080">00440301</span></div>
<div class="m" style="left:883px;top:204px">    8B</div>
<div class="m" style="left:1087px;top:204px"><span style="color:#808080">DB 8B</span></div>
<div class="m" style="left:775px;top:228px"><span style="color:#808080">00440302</span></div>
<div class="m" style="left:883px;top:228px">    EC</div>
<div class="m" style="left:1087px;top:228px"><span style="color:#808080">DB EC</span></div>
<div class="m" style="left:775px;top:252px"><span style="color:#808080">00440303</span></div>
<div class="m" style="left:883px;top:252px">    83</div>
<div class="m" style="left:1087px;top:252px"><span style="color:#808080">DB 83</span></div>
<div class="m" style="left:775px;top:276px"><span style="color:#808080">00440304</span></div>
<div class="m" style="left:883px;top:276px">    C4</div>
<div class="m" style="left:1087px;top:276px"><span style="color:#808080">DB C4</span></div>
<div class="m" style="left:775px;top:300px"><span style="color:#808080">00440305</span></div>
<div class="m" style="left:883px;top:300px">    F4</div>
<div class="m" style="left:1087px;top:300px"><span style="color:#808080">DB F4</span></div>
<div class="m" style="left:775px;top:324px"><span style="color:#808080">00440306</span></div>
<div class="m" style="left:883px;top:324px">    B8</div>
<div class="m" style="left:1087px;top:324px"><span style="color:#808080">DB B8</span></div>
<div class="m" style="left:775px;top:348px"><span style="color:#808080">00440307</span></div>
<div class="m" style="left:883px;top:348px">    C0</div>
<div class="m" style="left:1087px;top:348px"><span style="color:#808080">DB C0</span></div>
<div class="m" style="left:775px;top:372px"><span style="color:#808080">00440308</span></div>
<div class="m" style="left:883px;top:372px">    01</div>
<div class="m" style="left:1087px;top:372px"><span style="color:#808080">DB 01</span></div>
<div class="m" style="left:775px;top:396px"><span style="color:#808080">00440309</span></div>
<div class="m" style="left:883px;top:396px">    44</div>
<div class="m" style="left:1087px;top:396px"><span style="color:#808080">DB 44</span></div>
<div class="m" style="left:1567px;top:396px"> CHAR 'D'</div>
<div class="m" style="left:775px;top:420px"><span style="color:#808080">0044030A</span></div>
<div class="m" style="left:883px;top:420px">    00</div>
<div class="m" style="left:1087px;top:420px"><span style="color:#808080">DB 00</span></div>
<div class="m" style="left:775px;top:444px"><span style="color:#808080">0044030B</span></div>
<div class="m" style="left:883px;top:444px">    E8</div>
<div class="m" style="left:1087px;top:444px"><span style="color:#808080">DB E8</span></div>
<div class="m" style="left:775px;top:468px"><span style="color:#808080">0044030C</span></div>
<div class="m" style="left:883px;top:468px">    B4</div>
<div class="m" style="left:1087px;top:468px"><span style="color:#808080">DB B4</span></div>
<div class="m" style="left:775px;top:492px"><span style="color:#808080">0044030D</span></div>
<div class="m" style="left:883px;top:492px">    5B</div>
<div class="m" style="left:1087px;top:492px"><span style="color:#808080">DB 5B</span></div>
<div class="m" style="left:1567px;top:492px"> CHAR '['</div>
<div class="m" style="left:775px;top:516px"><span style="color:#808080">0044030E</span></div>
<div class="m" style="left:883px;top:516px">    FC</div>
<div class="m" style="left:1087px;top:516px"><span style="color:#808080">DB FC</span></div>
<div class="m" style="left:775px;top:540px"><span style="color:#808080">0044030F</span></div>
<div class="m" style="left:883px;top:540px">    FF</div>
<div class="m" style="left:1087px;top:540px"><span style="color:#808080">DB FF</span></div>
<div class="m" style="left:775px;top:564px"><span style="color:#808080">00440310</span></div>
<div class="m" style="left:883px;top:564px">    A1</div>
<div class="m" style="left:1087px;top:564px"><span style="color:#808080">DB A1</span></div>
<div class="m" style="left:775px;top:588px"><span style="color:#808080">00440311</span></div>
<div class="m" style="left:883px;top:588px">    2C</div>
<div class="m" style="left:1087px;top:588px"><span style="color:#808080">DB 2C</span></div>
<div class="m" style="left:1567px;top:588px"> CHAR ','</div>
<div class="m" style="left:775px;top:612px"><span style="color:#808080">00440312</span></div>
<div class="m" style="left:883px;top:612px">    1C</div>
<div class="m" style="left:1087px;top:612px"><span style="color:#808080">DB 1C</span></div>
<div class="m" style="left:775px;top:636px"><span style="color:#808080">00440313</span></div>
<div class="m" style="left:883px;top:636px">    44</div>
<div class="m" style="left:1087px;top:636px"><span style="color:#808080">DB 44</span></div>
<div class="m" style="left:1567px;top:636px"> CHAR 'D'</div>
<div class="m" style="left:775px;top:660px"><span style="color:#808080">00440314</span></div>
<div class="m" style="left:883px;top:660px">    00</div>
<div class="m" style="left:1087px;top:660px"><span style="color:#808080">DB 00</span></div>
<div class="m" style="left:775px;top:684px"><span style="color:#808080">00440315</span></div>
<div class="m" style="left:883px;top:684px">    8B</div>
<div class="m" style="left:1087px;top:684px"><span style="color:#808080">DB 8B</span></div>
<div class="m" style="left:775px;top:708px"><span style="color:#808080">00440316</span></div>
<div class="m" style="left:883px;top:708px">    00</div>
<div class="m" style="left:1087px;top:708px"><span style="color:#808080">DB 00</span></div>
<div class="m" style="left:775px;top:732px"><span style="color:#808080">00440317</span></div>
<div class="m" style="left:883px;top:732px">    E8</div>
<div class="m" style="left:1087px;top:732px"><span style="color:#808080">DB E8</span></div>
<div class="m" style="left:775px;top:756px"><span style="color:#808080">00440318</span></div>
<div class="m" style="left:883px;top:756px">    D8</div>
<div class="m" style="left:1087px;top:756px"><span style="color:#808080">DB D8</span></div>
<div class="m" style="left:775px;top:780px"><span style="color:#808080">00440319</span></div>
<div class="m" style="left:883px;top:780px">    E4</div>
<div class="m" style="left:1087px;top:780px"><span style="color:#808080">DB E4</span></div>
<div style="left:2208px;top:146px;width:2px;height:660px;background:#a4bcf8;"></div>
<div style="left:2208px;top:146px;width:2px;height:34px;background:#7c9cf4;"></div>
<div style="left:2208px;top:616px;width:2px;height:34px;background:#5c80e0;"></div>
</div>
</body></html>
